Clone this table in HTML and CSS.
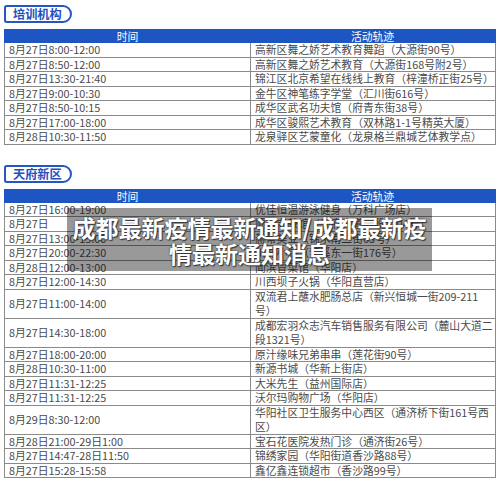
FILE: index.html
```html
<!DOCTYPE html>
<html lang="zh">
<head>
<meta charset="utf-8">
<link rel="stylesheet" href="styles.css">
</head>
<body>
<section class="block">
  <div class="tag">培训机构</div>
  <div class="grid">
    <div class="row head"><div class="c">时间</div><div class="c">活动轨迹</div></div>
    <div class="row"><div class="c">8月27日8:00-12:00</div><div class="c">高新区舞之娇艺术教育舞蹈（大源街90号）</div></div>
    <div class="row"><div class="c">8月27日8:50-12:00</div><div class="c">高新区舞之娇艺术教育（大源街168号附2号）</div></div>
    <div class="row"><div class="c">8月27日13:30-21:40</div><div class="c">锦江区北京希望在线线上教育（梓潼桥正街25号）</div></div>
    <div class="row"><div class="c">8月27日9:00-10:30</div><div class="c">金牛区神笔练字学堂（汇川街616号）</div></div>
    <div class="row"><div class="c">8月27日8:50-10:15</div><div class="c">成华区武名功夫馆（府青东街38号）</div></div>
    <div class="row"><div class="c">8月27日17:00-18:00</div><div class="c">成华区骏熙艺术教育（双林路1-1号精英大厦）</div></div>
    <div class="row"><div class="c">8月28日10:30-11:50</div><div class="c">龙泉驿区艺蒙童化（龙泉格兰鼎城艺体教学点）</div></div>
  </div>
</section>
<section class="block second">
  <div class="tag">天府新区</div>
  <div class="grid">
    <div class="row head"><div class="c">时间</div><div class="c">活动轨迹</div></div>
    <div class="row"><div class="c">8月27日16:00-19:00</div><div class="c">优佳恒温游泳健身（万科广场店）</div></div>
    <div class="row"><div class="c">8月27日</div><div class="c">顺兴老茶馆（天府大道南段1204号）</div></div>
    <div class="row"><div class="c">8月27日13:00-15:00</div><div class="c">赫蒂美业（锦水南二街63号）</div></div>
    <div class="row"><div class="c">8月27日20:00-22:30</div><div class="c">川味小厨（梦溪东一街176号）</div></div>
    <div class="row"><div class="c">8月28日12:00-13:00</div><div class="c">闻滨冒菜馆（华阳店）</div></div>
    <div class="row"><div class="c">8月27日12:00-14:30</div><div class="c">川西坝子火锅（华阳直营店）</div></div>
    <div class="row tall"><div class="c">8月27日11:00-14:00</div><div class="c">双流君上蘸水肥肠总店（新兴恒城一街209-211<br>号）</div></div>
    <div class="row tall"><div class="c">8月27日14:30-18:00</div><div class="c">成都宏羽众志汽车销售服务有限公司（麓山大道二<br>段1321号）</div></div>
    <div class="row"><div class="c">8月27日18:00-20:00</div><div class="c">原汁缘味兄弟串串（莲花街90号）</div></div>
    <div class="row"><div class="c">8月28日10:30-11:00</div><div class="c">新源书城（华新上街店）</div></div>
    <div class="row"><div class="c">8月27日11:31-12:25</div><div class="c">大米先生（益州国际店）</div></div>
    <div class="row"><div class="c">8月27日11:31-12:25</div><div class="c">沃尔玛购物广场（华阳店）</div></div>
    <div class="row tall"><div class="c">8月29日8:30-12:00</div><div class="c">华阳社区卫生服务中心西区（通济桥下街161号西<br>区）</div></div>
    <div class="row"><div class="c">8月28日21:00-29日1:00</div><div class="c">宝石花医院发热门诊（通济街26号）</div></div>
    <div class="row"><div class="c">8月27日14:47-28日11:50</div><div class="c">锦绣家园（华阳街道香沙路88号）</div></div>
    <div class="row"><div class="c">8月27日15:28-15:58</div><div class="c">鑫亿鑫连锁超市（香沙路99号）</div></div>
  </div>
</section>
<div class="caption">成都最新疫情最新通知/成都最新疫情最新通知消息</div>
</body>
</html>
```
FILE: styles.css
```css
html, body {
  margin: 0;
  padding: 0;
  background: #ffffff;
}
body {
  padding: 4px;
  font-family: "Noto Sans CJK SC", "Noto Sans", sans-serif;
  position: relative;
  overflow: hidden;
  height: 472px;
}
.block {
  display: flex;
  flex-direction: column;
  align-items: flex-start;
}
.second {
  margin-top: 19px;
}
.tag {
  box-sizing: border-box;
  width: 68px;
  height: 18px;
  margin-top: 1px;
  margin-bottom: 6px;
  border: 2px solid #2457c5;
  border-radius: 3px 10px 10px 3px;
  color: #1f4fbf;
  font-weight: 700;
  font-size: 12.2px;
  line-height: 14px;
  padding-left: 7px;
}
.grid {
  width: 492px;
  display: flex;
  flex-direction: column;
  font-size: 10.8px;
  color: #4a4a4a;
}
.row {
  display: grid;
  grid-template-columns: 1fr 1fr;
  border: 1px solid #8a8a8a;
  border-top: 0;
  white-space: nowrap;
}
.row .c {
  line-height: 13.5px;
  padding: 0 4px;
  min-width: 0;
}
.row .c:first-child {
  align-self: center;
}
.row .c + .c {
  border-left: 1px solid #8a8a8a;
}
.row.tall .c + .c {
  padding-top: 0.5px;
  padding-bottom: 0.5px;
}
.row.head {
  background: #1d56c2;
  border: 1px solid #1d56c2;
  border-bottom: 0;
  color: #ffffff;
  height: 14px;
  box-sizing: border-box;
}
.row.head .c {
  text-align: center;
  line-height: 13px;
  border-left: 0;
}
.caption {
  position: absolute;
  left: 67px;
  top: 208px;
  width: 365px;
  height: 63px;
  box-sizing: border-box;
  padding: 6px 4px 0;
  background: rgba(0, 0, 0, 0.4);
  color: #ffffff;
  font-weight: 700;
  font-size: 23px;
  line-height: 26px;
  text-align: center;
  text-shadow: 0 0 2px #333, 1px 1px 1px #333;
}
```
